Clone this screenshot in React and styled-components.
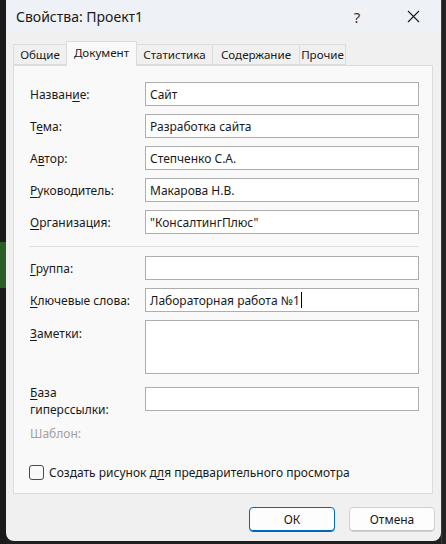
import React from 'react'
import styled, { createGlobalStyle } from 'styled-components'

const Global = createGlobalStyle`
  html, body {
    margin: 0;
    padding: 0;
    background: #1f1f1f;
    width: 446px;
    height: 544px;
    overflow: hidden;
    font-family: "Noto Sans", "Liberation Sans", sans-serif;
  }
`

const Screen = styled.div`
  display: grid;
  grid-template-columns: 6px 435px 5px;
  height: 544px;
`

const LeftStrip = styled.div`
  background: linear-gradient(180deg, #1b1b1b 0, #1b1b1b 242px, #2b5e27 242px, #2b5e27 288px, #1b1b1b 288px);
`

const RightStrip = styled.div`
  background: #222;
  border-left: 1px solid #3a3a3a;
`

const Dialog = styled.div`
  display: flex;
  flex-direction: column;
  height: 541px;
  background: #f0f0f0;
  border-radius: 0 0 8px 8px;
  overflow: hidden;
  color: #1a1a1a;
`

const TitleBar = styled.div`
  display: flex;
  align-items: center;
  height: 33px;
  background: #eef1f6;
  padding-left: 10px;
`

const Title = styled.div`
  flex: 1;
  font-size: 14px;
  color: #1a1a1a;
`

const TitleButton = styled.div`
  width: 56px;
  height: 33px;
  display: flex;
  align-items: center;
  justify-content: center;
  font-size: 15px;
  color: #333;
`

const Body = styled.div`
  display: flex;
  flex-direction: column;
  padding: 8px 8px 0 7px;
`

const Tabs = styled.div`
  display: flex;
  align-items: flex-end;
  height: 24px;
`

const Tab = styled.div`
  position: relative;
  z-index: ${p => (p.$active ? 2 : 1)};
  width: ${p => p.$w}px;
  height: ${p => (p.$active ? 25 : 21)}px;
  margin-bottom: ${p => (p.$active ? -1 : 0)}px;
  box-sizing: border-box;
  display: flex;
  align-items: center;
  justify-content: center;
  font-size: 11.6px;
  white-space: nowrap;
  background: ${p => (p.$active ? '#f9f9f9' : '#f0f0f0')};
  border: 1px solid #dcdcdc;
  border-bottom: ${p => (p.$active ? 'none' : '1px solid #dcdcdc')};
  margin-left: ${p => (p.$first ? 0 : -1)}px;
  padding-bottom: ${p => (p.$active ? 3 : 0)}px;
`

const Panel = styled.div`
  height: 429px;
  box-sizing: border-box;
  background: #f9f9f9;
  border: 1px solid #dcdcdc;
  padding: 16px 13px 0 16px;
  display: flex;
  flex-direction: column;
`

const Row = styled.div`
  display: flex;
  align-items: ${p => (p.$top ? 'flex-start' : 'center')};
  margin-bottom: ${p => p.$mb ?? 8}px;
`

const Label = styled.div`
  width: 115px;
  flex: none;
  font-size: 12px;
  line-height: 17px;
  color: ${p => (p.$disabled ? '#a0a0a0' : '#1a1a1a')};
  padding-top: ${p => p.$pt || 0}px;
  u { text-decoration-thickness: 1px; text-underline-offset: 2px; }
`

const Field = styled.div`
  flex: 1;
  height: ${p => p.$h || 24}px;
  margin-top: ${p => p.$mt || 0}px;
  box-sizing: border-box;
  background: #fff;
  border: 1px solid #adadad;
  padding: 0 4px;
  display: flex;
  align-items: ${p => (p.$multi ? 'flex-start' : 'center')};
  font-size: 12px;
  white-space: nowrap;
`

const Caret = styled.span`
  display: inline-block;
  width: 1px;
  height: 16px;
  background: #000;
  margin-left: 1px;
`

const Separator = styled.div`
  height: 1px;
  background: #e0e0e0;
  margin: 4px 0 9px -1px;
`

const CheckRow = styled.label`
  display: flex;
  align-items: center;
  gap: 5px;
  margin-left: -1px;
  font-size: 12px;
  u { text-decoration-thickness: 1px; text-underline-offset: 2px; }
`

const Box = styled.span`
  width: 15px;
  height: 15px;
  box-sizing: border-box;
  border: 1px solid #4a4a4a;
  border-radius: 3px;
  background: #f9f9f9;
`

const Buttons = styled.div`
  display: flex;
  justify-content: flex-end;
  gap: 14px;
  padding-top: 13px;
  margin-right: -2px;
`

const Button = styled.div`
  width: 86px;
  height: 25px;
  box-sizing: border-box;
  display: flex;
  align-items: center;
  justify-content: center;
  border-radius: 4px;
  background: #fdfdfd;
  font-size: 12px;
  border: 1px solid ${p => (p.$primary ? '#0067c0' : '#d0d0d0')};
  box-shadow: ${p => (p.$primary ? 'inset 0 -1px 0 #0067c0' : 'inset 0 -1px 0 #c4c4c4')};
`

const tabs = [
  ['Общие', 54],
  ['Документ', 71],
  ['Статистика', 77],
  ['Содержание', 88],
  ['Прочие', 47],
]

export default function App() {
  return (
    <Screen>
      <Global />
      <LeftStrip />
      <Dialog>
        <TitleBar>
          <Title>Свойства: Проект1</Title>
          <TitleButton>?</TitleButton>
          <TitleButton>
            <svg width="13" height="13" viewBox="0 0 13 13">
              <path d="M1 1 L12 12 M12 1 L1 12" stroke="#1a1a1a" strokeWidth="1.1" />
            </svg>
          </TitleButton>
        </TitleBar>
        <Body>
          <Tabs>
            {tabs.map(([t, w], i) => (
              <Tab key={t} $w={w} $first={i === 0} $active={i === 1}>{t}</Tab>
            ))}
          </Tabs>
          <Panel>
            <Row>
              <Label>Назван<u>и</u>е:</Label>
              <Field>Сайт</Field>
            </Row>
            <Row>
              <Label>Т<u>е</u>ма:</Label>
              <Field>Разработка сайта</Field>
            </Row>
            <Row>
              <Label>А<u>в</u>тор:</Label>
              <Field>Степченко С.А.</Field>
            </Row>
            <Row>
              <Label><u>Р</u>уководитель:</Label>
              <Field>Макарова Н.В.</Field>
            </Row>
            <Row>
              <Label><u>О</u>рганизация:</Label>
              <Field>"КонсалтингПлюс"</Field>
            </Row>
            <Separator />
            <Row>
              <Label><u>Г</u>руппа:</Label>
              <Field />
            </Row>
            <Row>
              <Label><u>К</u>лючевые слова:</Label>
              <Field>Лабораторная работа №1<Caret /></Field>
            </Row>
            <Row $top $mb={10}>
              <Label $pt={5}><u>З</u>аметки:</Label>
              <Field $h={54} $multi />
            </Row>
            <Row $top $mb={7}>
              <Label><u>Б</u>аза<br />гиперссылки:</Label>
              <Field $mt={3} />
            </Row>
            <Row $mb={22}>
              <Label $disabled>Шаблон:</Label>
            </Row>
            <CheckRow>
              <Box />
              <span>Создать рисунок д<u>л</u>я предварительного просмотра</span>
            </CheckRow>
          </Panel>
          <Buttons>
            <Button $primary>ОК</Button>
            <Button>Отмена</Button>
          </Buttons>
        </Body>
      </Dialog>
      <RightStrip />
    </Screen>
  )
}
